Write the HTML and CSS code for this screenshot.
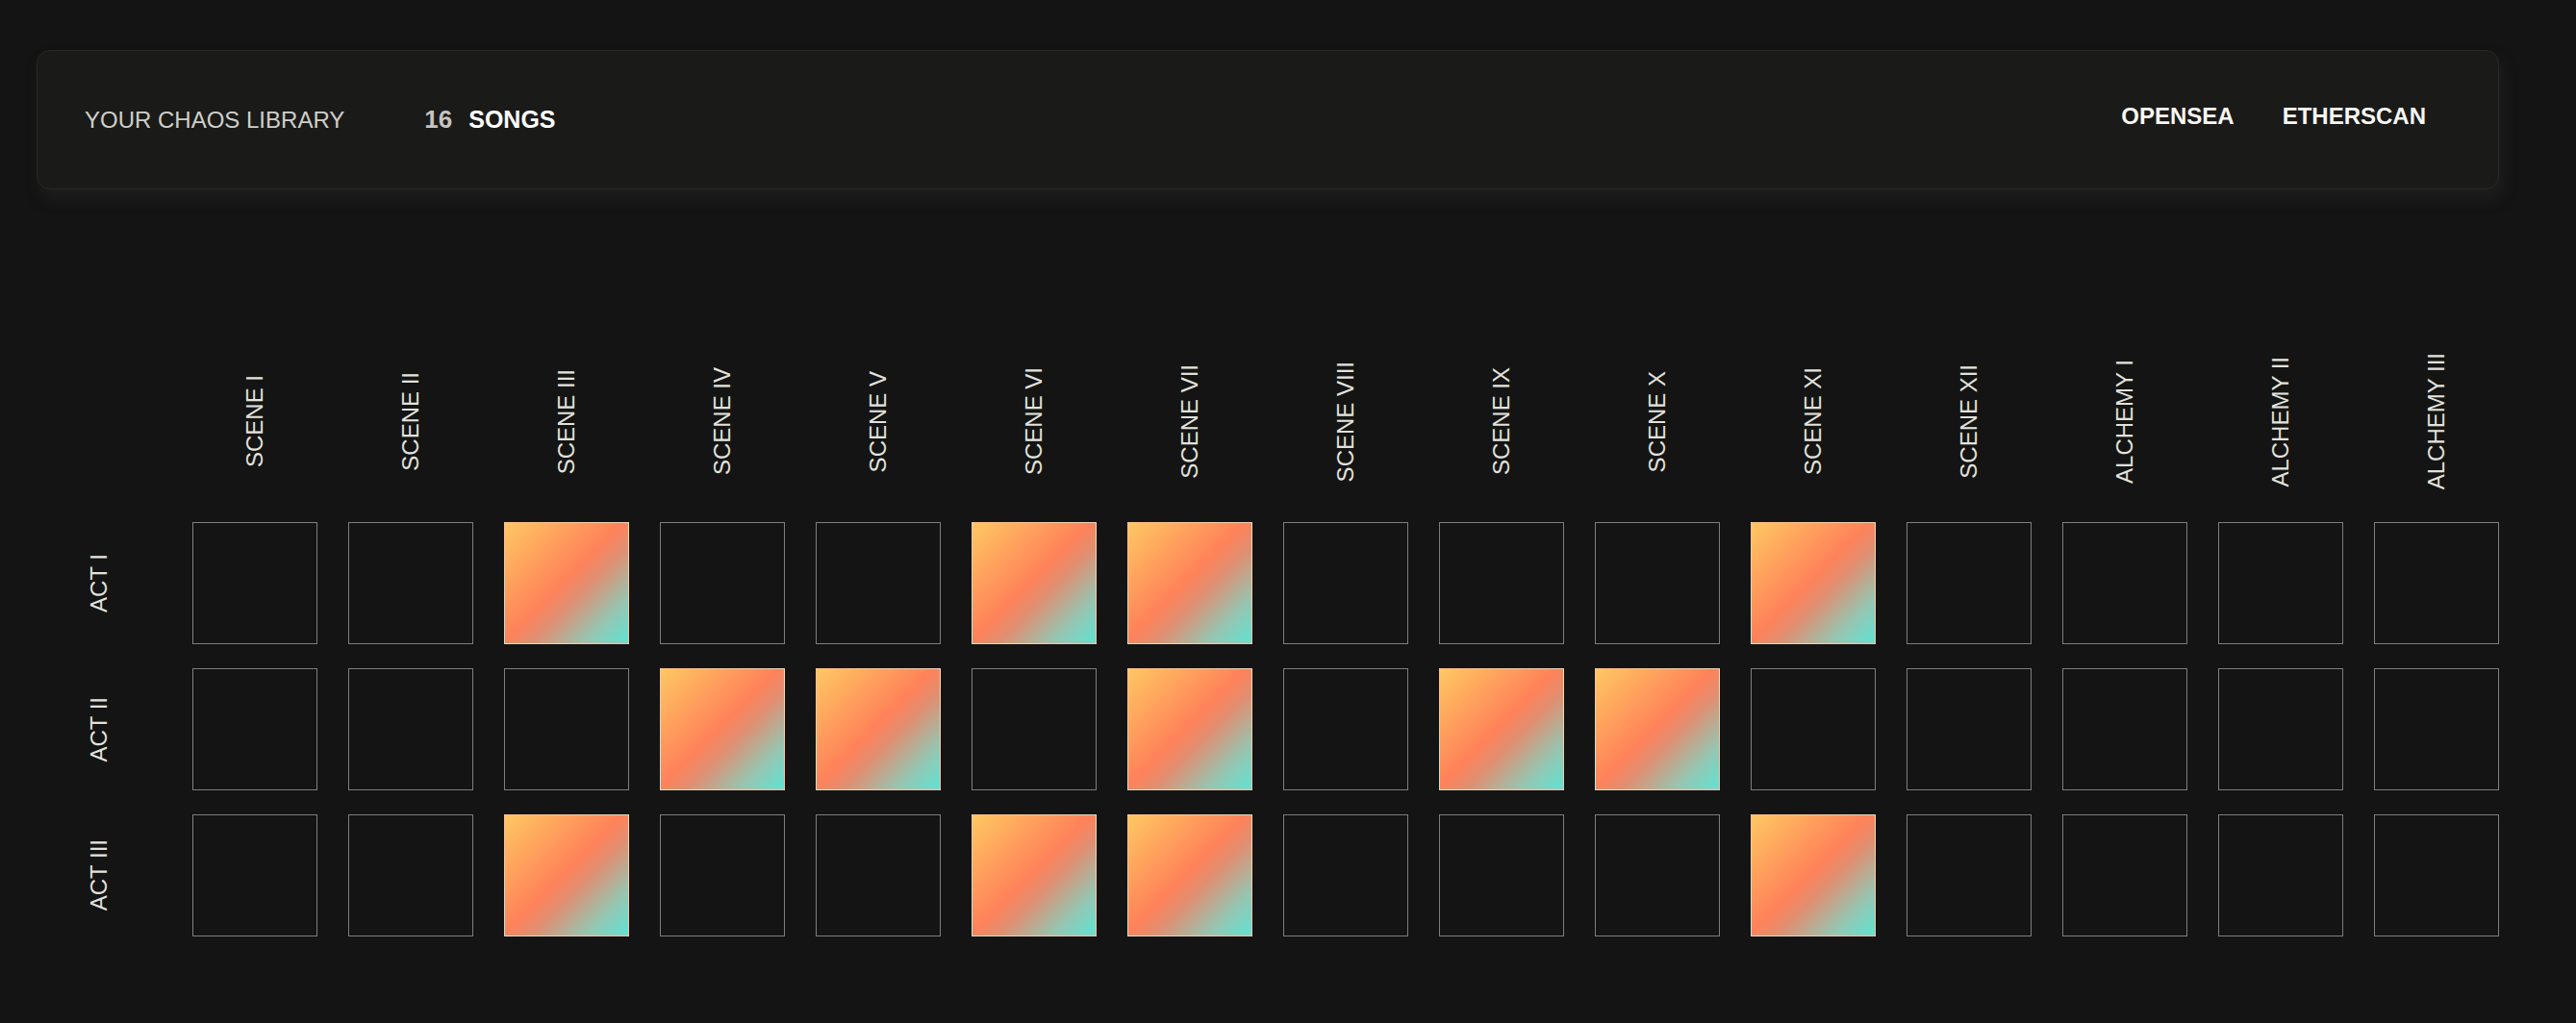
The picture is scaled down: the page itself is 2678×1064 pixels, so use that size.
FILE: index.html
```html
<!DOCTYPE html>
<html lang="en">
    <head>
        <meta charset="UTF-8">
        <meta name="viewport" content="width=device-width, initial-scale=1.0">
        <title>Chaos Library</title>
        <link rel="stylesheet" href="styles.css">
    </head>
    <body>
        <div class="page">
            <header class="bar">
                <div class="bar-left">
                    <span class="bar-title">YOUR CHAOS LIBRARY</span>
                    <span class="count"><b class="count-num">16</b><b class="count-label">SONGS</b></span>
                </div>
                <nav class="links">
                    <a href="#">OPENSEA</a>
                    <a href="#">ETHERSCAN</a>
                </nav>
            </header>

            <div class="library" id="library"></div>
        </div>

        <script>
        const scenes = ['SCENE I', 'SCENE II', 'SCENE III', 'SCENE IV', 'SCENE V',
            'SCENE VI', 'SCENE VII', 'SCENE VIII', 'SCENE IX', 'SCENE X',
            'SCENE XI', 'SCENE XII', 'ALCHEMY I', 'ALCHEMY II', 'ALCHEMY III'];
        const acts = ['ACT I', 'ACT II', 'ACT III'];

        // which scenes are owned in each act (0-based column index)
        const owned = [
            [2, 5, 6, 10],
            [3, 4, 6, 8, 9],
            [2, 5, 6, 10]
        ];

        const grid = document.getElementById('library');

        function label(text, cls) {
            const el = document.createElement('div');
            el.className = cls;
            const span = document.createElement('span');
            span.className = 'vert';
            span.textContent = text;
            el.appendChild(span);
            grid.appendChild(el);
        }

        // header row
        grid.appendChild(document.createElement('div'));
        scenes.forEach(s => label(s, 'col-label'));

        // one row per act
        acts.forEach((act, i) => {
            label(act, 'row-label');
            scenes.forEach((s, j) => {
                const cell = document.createElement('div');
                cell.className = owned[i].includes(j) ? 'cell filled' : 'cell';
                grid.appendChild(cell);
            });
        });
        </script>
    </body>
</html>
```

FILE: styles.css
```css
body {
    margin: 0;
    background: #141414;
    color: #e4e4de;
    font-family: "Liberation Sans", Arial, sans-serif;
}
.page {
    padding: 52px 80px 40px 38px;
}

.bar {
    display: flex;
    align-items: center;
    justify-content: space-between;
    height: 143px;
    padding: 0 75px 0 49px;
    background: #1a1a19;
    border: 1px solid #292928;
    border-radius: 14px;
    box-shadow: 4px 10px 14px rgba(40, 40, 40, 0.5);
}
.bar-left {
    display: flex;
    align-items: center;
    gap: 83px;
}
.bar-title {
    font-size: 24px;
    color: #cfcfc8;
}
.count {
    display: flex;
    align-items: center;
    gap: 17px;
    font-size: 25px;
}
.count-num { color: #c4c4c0; font-size: 26px; }
.count-label { color: #fff; }

.links {
    display: flex;
    gap: 50px;
    padding-bottom: 7px;
}
.links a {
    color: #f7f7f2;
    font-size: 24px;
    font-weight: bold;
    text-decoration: none;
}

.library {
    display: grid;
    grid-template-columns: repeat(16, 130px);
    grid-template-rows: 159px repeat(3, 127px);
    column-gap: 32px;
    row-gap: 25px;
    margin-top: 162px;
}
.col-label, .row-label {
    display: flex;
    align-items: center;
    justify-content: center;
}
.vert {
    writing-mode: vertical-rl;
    transform: rotate(180deg);
    font-size: 24px;
    color: #e2e2dc;
    white-space: nowrap;
}

.cell {
    box-sizing: border-box;
    border: 1px solid rgba(255, 255, 255, 0.45);
}
.filled {
    background: linear-gradient(135deg, #ffc862 0%, #ffa35d 25%, #ff825a 48%, #e08f72 60%, #95c6b2 82%, #5ee3d3 100%);
}
```
